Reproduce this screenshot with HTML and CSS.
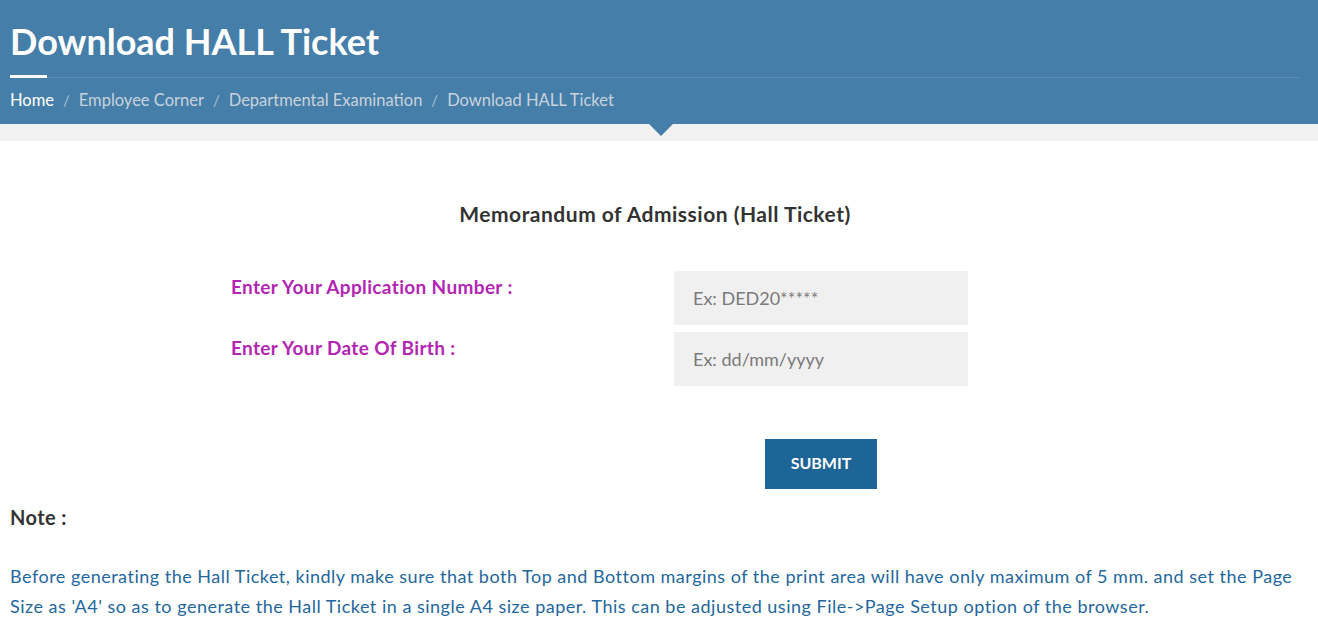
FILE: index.html
```html
<!DOCTYPE html>
<html lang="en">
<head>
<meta charset="utf-8">
<title>Download HALL Ticket</title>
<link rel="stylesheet" href="styles.css">
</head>
<body>
<header class="page-header">
  <div class="header-inner">
    <h1 class="page-title">Download HALL Ticket</h1>
    <div class="title-rule"><span class="title-accent"></span></div>
    <nav class="breadcrumb">
      <a class="crumb crumb-home" href="#">Home</a>
      <span class="sep">/</span>
      <a class="crumb" href="#">Employee Corner</a>
      <span class="sep">/</span>
      <a class="crumb" href="#">Departmental Examination</a>
      <span class="sep">/</span>
      <span class="crumb">Download HALL Ticket</span>
    </nav>
  </div>
</header>
<div class="header-strip"><span class="strip-arrow"></span></div>

<main class="content">
  <h2 class="form-title">Memorandum of Admission (Hall Ticket)</h2>
  <form class="ticket-form">
    <label class="field-label" for="appno">Enter Your Application Number :</label>
    <input class="field-input" id="appno" type="text" placeholder="Ex: DED20*****">
    <label class="field-label" for="dob">Enter Your Date Of Birth :</label>
    <input class="field-input" id="dob" type="text" placeholder="Ex: dd/mm/yyyy">
    <div class="submit-cell"><button class="submit-btn" type="button">SUBMIT</button></div>
  </form>
  <h3 class="note-title">Note :</h3>
  <p class="note-text">Before generating the Hall Ticket, kindly make sure that both Top and Bottom margins of the print area will have only maximum of 5 mm. and set the Page Size as 'A4' so as to generate the Hall Ticket in a single A4 size paper. This can be adjusted using File-&gt;Page Setup option of the browser.</p>
</main>
</body>
</html>
```

FILE: styles.css
```css
* { box-sizing: border-box; }
html, body { margin: 0; padding: 0; background: #fff; }
body {
  font-family: "Lato", "Liberation Sans", sans-serif;
  color: #333;
  overflow: hidden;
}

.page-header {
  background: #457ea8;
  height: 124px;
}
.header-inner {
  padding: 0 18px 0 10px;
}
.page-title {
  margin: 0;
  padding-top: 19px;
  font-size: 36px;
  line-height: 44px;
  font-weight: 700;
  color: #fff;
}
.title-rule {
  margin-top: 14px;
  height: 1px;
  background: #5b8fb8;
  position: relative;
}
.title-accent {
  position: absolute;
  left: 0;
  top: -2px;
  width: 37px;
  height: 3px;
  background: #fff;
}
.breadcrumb {
  display: flex;
  align-items: center;
  margin-top: 11px;
  font-size: 16.5px;
  line-height: 22px;
}
.crumb { color: #c8d3dd; text-decoration: none; }
.crumb-home { color: #fff; }
.sep { color: #a9bfd2; margin: 0 9px; font-size: 15px; }

.header-strip {
  background: #f2f2f2;
  height: 17px;
  position: relative;
}
.strip-arrow {
  position: absolute;
  left: 649px;
  top: 0;
  width: 0;
  height: 0;
  border-left: 12px solid transparent;
  border-right: 12px solid transparent;
  border-top: 12px solid #457ea8;
}

.content {
  padding: 0 18px 0 10px;
}
.form-title {
  margin: 60px 0 0;
  text-align: center;
  font-size: 21px;
  line-height: 26px;
  font-weight: 700;
  letter-spacing: 0.5px;
  color: #333;
}
.ticket-form {
  display: grid;
  grid-template-columns: 443px 294px;
  row-gap: 7px;
  margin: 44px 0 0 221px;
}
.field-label {
  padding-top: 5px;
  font-size: 19px;
  line-height: 22px;
  font-weight: 700;
  letter-spacing: 0.35px;
  color: #b326b3;
}
.field-input {
  height: 54px;
  width: 294px;
  border: 0;
  background: #f0f0f0;
  padding: 0 19px;
  font-family: inherit;
  font-size: 18px;
  color: #555;
}
.field-input::placeholder { color: #7a7a7a; }
.submit-cell {
  grid-column: 2;
  display: flex;
  justify-content: center;
  margin-top: 46px;
}
.submit-btn {
  width: 112px;
  height: 50px;
  border: 0;
  padding: 0 0 3px;
  background: #1d6497;
  color: #fff;
  font-family: inherit;
  font-size: 16px;
  font-weight: 700;
}
.note-title {
  margin: 15px 0 0;
  font-size: 20px;
  line-height: 26px;
  font-weight: 700;
  letter-spacing: 0.4px;
  color: #333;
}
.note-text {
  margin: 31px 0 0;
  font-size: 18px;
  line-height: 30px;
  letter-spacing: 0.5px;
  color: #24679c;
}
```
